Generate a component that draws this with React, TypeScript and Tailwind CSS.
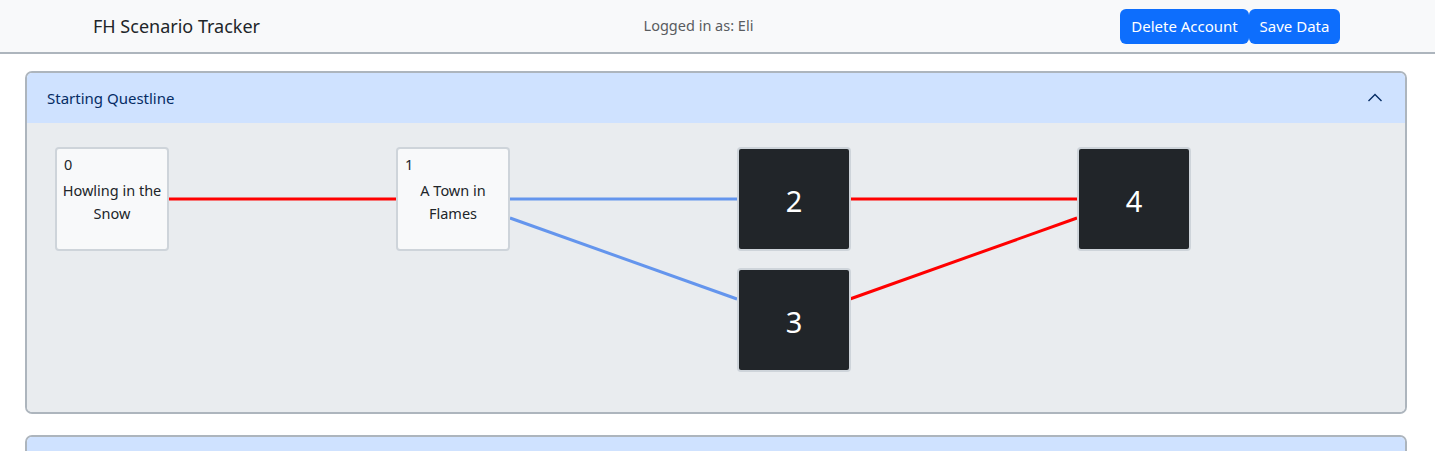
import React from "react";

type Node = { id: number; x: number; y: number; title?: string; done: boolean };

const nodes: Node[] = [
  { id: 0, x: 28, y: 24, title: "Howling in the Snow", done: true },
  { id: 1, x: 369, y: 24, title: "A Town in Flames", done: true },
  { id: 2, x: 710, y: 24, done: false },
  { id: 3, x: 710, y: 145, done: false },
  { id: 4, x: 1050, y: 24, done: false },
];

// edges in body coordinates
const edges = [
  { x1: 142, y1: 76, x2: 369, y2: 76, color: "#ff0000" },
  { x1: 483, y1: 76, x2: 710, y2: 76, color: "#6495ed" },
  { x1: 483, y1: 95, x2: 710, y2: 176, color: "#6495ed" },
  { x1: 823, y1: 76, x2: 1050, y2: 76, color: "#ff0000" },
  { x1: 823, y1: 176, x2: 1050, y2: 95, color: "#ff0000" },
];

function ScenarioNode({ node }: { node: Node }) {
  if (!node.done) {
    return (
      <div
        className="absolute flex h-[104px] w-[114px] items-center justify-center rounded-[4px] border-2 border-[#ced4da] bg-[#212529] pt-1 text-[29px] text-white"
        style={{ left: node.x, top: node.y }}
      >
        {node.id}
      </div>
    );
  }
  return (
    <div
      className="absolute flex h-[104px] w-[114px] flex-col rounded-[4px] border-2 border-[#ced4da] bg-[#f8f9fa] pt-[4px] text-[14.5px] leading-[23px] text-[#212529]"
      style={{ left: node.x, top: node.y }}
    >
      <div className="pl-[7px]">{node.id}</div>
      <div className="mt-[3px] text-center">{node.title}</div>
    </div>
  );
}

export default function App() {
  return (
    <div className="min-h-screen bg-white font-['Noto_Sans',sans-serif] text-[#212529]">
      <nav className="flex h-[54px] items-center border-b-2 border-[#adb5bd] bg-[#f8f9fa]">
        <div className="w-[93px]" />
        <div className="w-[300px] text-[18px]">FH Scenario Tracker</div>
        <div className="flex-1 text-center text-[14.5px] text-[#595c5f]">
          <span className="relative left-[-58px]">Logged in as: Eli</span>
        </div>
        <div className="mr-[95px] flex">
          <button className="h-[35px] w-[129px] rounded-[6px] bg-[#0d6efd] text-[15px] text-white">
            Delete Account
          </button>
          <button className="h-[35px] w-[91px] rounded-[6px] bg-[#0d6efd] text-[15px] text-white">
            Save Data
          </button>
        </div>
      </nav>

      <div className="ml-[25px] mr-[28px] mt-[17px] flex flex-col gap-[21px]">
        <div className="overflow-hidden rounded-[7px] border-2 border-[#adb5bd]">
          <div className="flex h-[50px] items-center justify-between bg-[#cfe2ff] pl-[20px] pr-[22px] text-[15px] text-[#052c65]">
            <span>Starting Questline</span>
            <svg width="16" height="16" viewBox="0 0 16 16" fill="none">
              <path d="M1.5 11 L8 4.5 L14.5 11" stroke="#052c65" strokeWidth="1.4" />
            </svg>
          </div>
          <div className="relative h-[289px] bg-[#e9ecef]">
            <svg className="absolute inset-0" width="1378" height="289">
              {edges.map((e, i) => (
                <line key={i} x1={e.x1} y1={e.y1} x2={e.x2} y2={e.y2} stroke={e.color} strokeWidth="3" />
              ))}
            </svg>
            {nodes.map((n) => (
              <ScenarioNode key={n.id} node={n} />
            ))}
          </div>
        </div>

        <div className="overflow-hidden rounded-[7px] border-2 border-[#adb5bd]">
          <div className="h-[50px] bg-[#cfe2ff]" />
        </div>
      </div>
    </div>
  );
}
